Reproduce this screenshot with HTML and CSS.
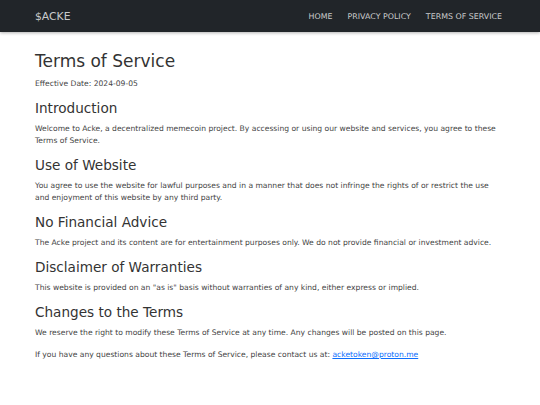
FILE: index.html
```html
<!DOCTYPE html>
<html lang="en">
<head>
<meta charset="utf-8">
<title>Terms of Service - $ACKE</title>
<link rel="stylesheet" href="styles.css">
</head>
<body>
<header class="navbar">
  <a class="brand" href="#">$ACKE</a>
  <nav class="nav">
    <a href="#">HOME</a>
    <a href="#">PRIVACY POLICY</a>
    <a href="#">TERMS OF SERVICE</a>
  </nav>
</header>
<main class="content">
  <h1>Terms of Service</h1>
  <p>Effective Date: 2024-09-05</p>

  <h2>Introduction</h2>
  <p>Welcome to Acke, a decentralized memecoin project. By accessing or using our website and services, you agree to these Terms of Service.</p>

  <h2>Use of Website</h2>
  <p>You agree to use the website for lawful purposes and in a manner that does not infringe the rights of or restrict the use and enjoyment of this website by any third party.</p>

  <h2>No Financial Advice</h2>
  <p>The Acke project and its content are for entertainment purposes only. We do not provide financial or investment advice.</p>

  <h2>Disclaimer of Warranties</h2>
  <p>This website is provided on an "as is" basis without warranties of any kind, either express or implied.</p>

  <h2>Changes to the Terms</h2>
  <p>We reserve the right to modify these Terms of Service at any time. Any changes will be posted on this page.</p>

  <p>If you have any questions about these Terms of Service, please contact us at: <a href="#">acketoken@proton.me</a></p>
</main>
</body>
</html>
```
FILE: styles.css
```css
html, body {
  margin: 0;
  padding: 0;
  background: #fff;
}
body {
  font-family: "DejaVu Sans", Verdana, sans-serif;
  color: #444;
}
.navbar {
  display: flex;
  align-items: center;
  justify-content: space-between;
  height: 32px;
  padding: 0 38px 0 35px;
  background: #212529;
  box-shadow: 0 1px 3px rgba(0,0,0,0.3);
}
.brand {
  color: #c9cacb;
  text-decoration: none;
  font-size: 10.8px;
}
.nav {
  display: flex;
  gap: 15px;
}
.nav a {
  color: #c9cacb;
  text-decoration: none;
  font-size: 7.9px;
}
.content {
  padding: 19px 35px 20px 35px;
  width: 470px;
}
h1 {
  font-weight: normal;
  font-size: 17px;
  color: #333;
  margin: 0 0 7px 0;
  line-height: 1.2;
}
h2 {
  font-weight: normal;
  font-size: 13.6px;
  color: #333;
  margin: 10px 0 6.6px 0;
  line-height: 1.2;
}
p {
  font-size: 7.6px;
  line-height: 12px;
  margin: 0 0 10px 0;
}
a {
  color: #0d6efd;
}
```
